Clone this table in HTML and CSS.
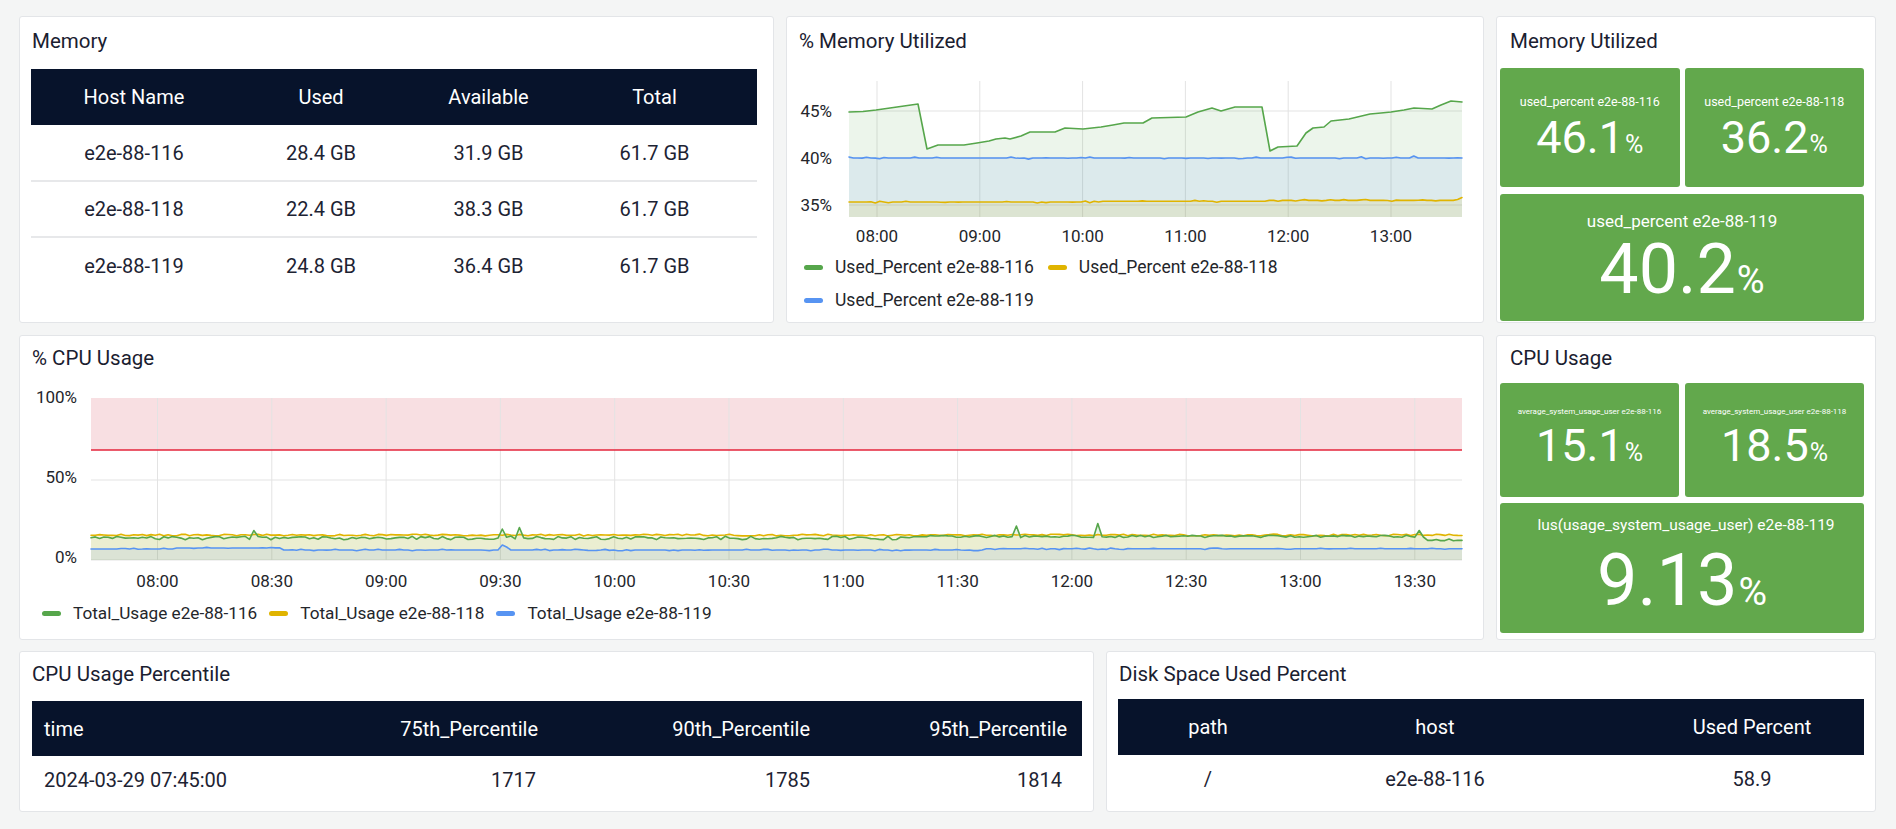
FILE: index.html
```html
<!DOCTYPE html>
<html lang="en">
<head>
<meta charset="utf-8">
<title>Host Metrics</title>
<link rel="stylesheet" href="styles.css">
</head>
<body>
<div class="dashboard">
  <div class="row row-1">
    <section class="panel">
      <h2 class="panel-title">Memory</h2>
      <table class="data-table table-memory">
        <colgroup><col class="mc1"><col class="mc2"><col class="mc3"><col class="mc4"></colgroup>
        <thead><tr><th>Host Name</th><th>Used</th><th>Available</th><th>Total</th></tr></thead>
        <tbody>
          <tr><td>e2e-88-116</td><td>28.4 GB</td><td>31.9 GB</td><td>61.7 GB</td></tr>
          <tr><td>e2e-88-118</td><td>22.4 GB</td><td>38.3 GB</td><td>61.7 GB</td></tr>
          <tr><td>e2e-88-119</td><td>24.8 GB</td><td>36.4 GB</td><td>61.7 GB</td></tr>
        </tbody>
      </table>
    </section>

    <section class="panel">
      <h2 class="panel-title">% Memory Utilized</h2>
      <div class="chart-wrap chart-mem">
        <svg class="chart" width="669" height="186" viewBox="0 0 669 186">
          <g class="grid">
            <line x1="50" y1="41" x2="663" y2="41"/>
            <line x1="50" y1="88" x2="663" y2="88"/>
            <line x1="50" y1="135" x2="663" y2="135"/>
            <line x1="78" y1="11" x2="78" y2="147"/>
            <line x1="180.8" y1="11" x2="180.8" y2="147"/>
            <line x1="283.6" y1="11" x2="283.6" y2="147"/>
            <line x1="386.4" y1="11" x2="386.4" y2="147"/>
            <line x1="489.2" y1="11" x2="489.2" y2="147"/>
            <line x1="592" y1="11" x2="592" y2="147"/>
          </g>
          <path id="m116-area" class="area area-green"/>
          <path id="m119-area" class="area area-blue"/>
          <path id="m118-area" class="area area-yellow"/>
          <path id="m119-line" class="line line-blue"/>
          <path id="m118-line" class="line line-yellow"/>
          <path id="m116-line" class="line line-green"/>
          <text class="axis-label" x="33" y="47" text-anchor="end">45%</text>
          <text class="axis-label" x="33" y="94" text-anchor="end">40%</text>
          <text class="axis-label" x="33" y="141" text-anchor="end">35%</text>
          <text class="axis-label" x="78" y="172" text-anchor="middle">08:00</text>
          <text class="axis-label" x="180.8" y="172" text-anchor="middle">09:00</text>
          <text class="axis-label" x="283.6" y="172" text-anchor="middle">10:00</text>
          <text class="axis-label" x="386.4" y="172" text-anchor="middle">11:00</text>
          <text class="axis-label" x="489.2" y="172" text-anchor="middle">12:00</text>
          <text class="axis-label" x="592" y="172" text-anchor="middle">13:00</text>
        </svg>
        <div class="legend legend-mem">
          <span class="legend-item"><i class="swatch sw-green"></i>Used_Percent e2e-88-116</span>
          <span class="legend-item"><i class="swatch sw-yellow"></i>Used_Percent e2e-88-118</span>
          <span class="legend-item"><i class="swatch sw-blue"></i>Used_Percent e2e-88-119</span>
        </div>
      </div>
    </section>

    <section class="panel">
      <h2 class="panel-title title-stat">Memory Utilized</h2>
      <div class="stat-grid stat-grid-mem">
        <div class="stat stat-mem-sm">
          <div class="stat-label label-md">used_percent e2e-88-116</div>
          <div class="stat-value value-md">46.1<span class="unit">%</span></div>
        </div>
        <div class="stat stat-mem-sm">
          <div class="stat-label label-md">used_percent e2e-88-118</div>
          <div class="stat-value value-md">36.2<span class="unit">%</span></div>
        </div>
        <div class="stat stat-wide stat-mem-lg">
          <div class="stat-label label-lg">used_percent e2e-88-119</div>
          <div class="stat-value value-lg">40.2<span class="unit">%</span></div>
        </div>
      </div>
    </section>
  </div>

  <div class="row row-2">
    <section class="panel">
      <h2 class="panel-title">% CPU Usage</h2>
      <div class="chart-wrap chart-cpu">
        <svg class="chart" width="1435" height="210" viewBox="0 0 1435 210">
          <rect class="threshold-area" x="58" y="13" width="1371" height="52"/>
          <g class="grid">
            <line x1="58" y1="95" x2="1429" y2="95"/>
            <line x1="58" y1="175" x2="1429" y2="175"/>
            <line x1="124.5" y1="13" x2="124.5" y2="175"/>
            <line x1="238.8" y1="13" x2="238.8" y2="175"/>
            <line x1="353.1" y1="13" x2="353.1" y2="175"/>
            <line x1="467.4" y1="13" x2="467.4" y2="175"/>
            <line x1="581.7" y1="13" x2="581.7" y2="175"/>
            <line x1="696" y1="13" x2="696" y2="175"/>
            <line x1="810.3" y1="13" x2="810.3" y2="175"/>
            <line x1="924.6" y1="13" x2="924.6" y2="175"/>
            <line x1="1038.9" y1="13" x2="1038.9" y2="175"/>
            <line x1="1153.2" y1="13" x2="1153.2" y2="175"/>
            <line x1="1267.5" y1="13" x2="1267.5" y2="175"/>
            <line x1="1381.8" y1="13" x2="1381.8" y2="175"/>
          </g>
          <line class="threshold-line" x1="58" y1="65" x2="1429" y2="65"/>
          <path id="c116-area" class="area area-green"/>
          <path id="c118-area" class="area area-yellow"/>
          <path id="c119-area" class="area area-blue"/>
          <path id="c119-line" class="line line-blue"/>
          <path id="c118-line" class="line line-yellow"/>
          <path id="c116-line" class="line line-green"/>
          <text class="axis-label" x="44" y="18" text-anchor="end">100%</text>
          <text class="axis-label" x="44" y="98" text-anchor="end">50%</text>
          <text class="axis-label" x="44" y="178" text-anchor="end">0%</text>
          <text class="axis-label" x="124.5" y="202" text-anchor="middle">08:00</text>
          <text class="axis-label" x="238.8" y="202" text-anchor="middle">08:30</text>
          <text class="axis-label" x="353.1" y="202" text-anchor="middle">09:00</text>
          <text class="axis-label" x="467.4" y="202" text-anchor="middle">09:30</text>
          <text class="axis-label" x="581.7" y="202" text-anchor="middle">10:00</text>
          <text class="axis-label" x="696" y="202" text-anchor="middle">10:30</text>
          <text class="axis-label" x="810.3" y="202" text-anchor="middle">11:00</text>
          <text class="axis-label" x="924.6" y="202" text-anchor="middle">11:30</text>
          <text class="axis-label" x="1038.9" y="202" text-anchor="middle">12:00</text>
          <text class="axis-label" x="1153.2" y="202" text-anchor="middle">12:30</text>
          <text class="axis-label" x="1267.5" y="202" text-anchor="middle">13:00</text>
          <text class="axis-label" x="1381.8" y="202" text-anchor="middle">13:30</text>
        </svg>
        <div class="legend legend-cpu">
          <span class="legend-item"><i class="swatch sw-green"></i>Total_Usage e2e-88-116</span>
          <span class="legend-item"><i class="swatch sw-yellow"></i>Total_Usage e2e-88-118</span>
          <span class="legend-item"><i class="swatch sw-blue"></i>Total_Usage e2e-88-119</span>
        </div>
      </div>
    </section>

    <section class="panel">
      <h2 class="panel-title title-stat">CPU Usage</h2>
      <div class="stat-grid stat-grid-cpu">
        <div class="stat stat-cpu-sm">
          <div class="stat-label label-xs">average_system_usage_user e2e-88-116</div>
          <div class="stat-value value-md">15.1<span class="unit">%</span></div>
        </div>
        <div class="stat stat-cpu-sm">
          <div class="stat-label label-xs">average_system_usage_user e2e-88-118</div>
          <div class="stat-value value-md">18.5<span class="unit">%</span></div>
        </div>
        <div class="stat stat-wide stat-cpu-lg">
          <div class="stat-label label-clip">lus(usage_system_usage_user) e2e-88-119</div>
          <div class="stat-value value-xl">9.13<span class="unit">%</span></div>
        </div>
      </div>
    </section>
  </div>

  <div class="row row-3">
    <section class="panel">
      <h2 class="panel-title">CPU Usage Percentile</h2>
      <table class="data-table table-pct">
        <colgroup><col class="pc1"><col class="pc2"><col class="pc3"><col class="pc4"></colgroup>
        <thead><tr><th>time</th><th>75th_Percentile</th><th>90th_Percentile</th><th>95th_Percentile</th></tr></thead>
        <tbody>
          <tr><td>2024-03-29 07:45:00</td><td>1717</td><td>1785</td><td>1814</td></tr>
        </tbody>
      </table>
    </section>

    <section class="panel">
      <h2 class="panel-title">Disk Space Used Percent</h2>
      <table class="data-table table-disk">
        <colgroup><col class="dc1"><col class="dc2"><col class="dc3"></colgroup>
        <thead><tr><th>path</th><th>host</th><th>Used Percent</th></tr></thead>
        <tbody>
          <tr><td>/</td><td>e2e-88-116</td><td>58.9</td></tr>
        </tbody>
      </table>
    </section>
  </div>
</div>
<script src="script.js"></script>
</body>
</html>
```

FILE: styles.css
```css
* { box-sizing: border-box; }
html, body { margin: 0; padding: 0; }
body {
  background: #f4f5f5;
  font-family: Roboto, "Liberation Sans", Arial, sans-serif;
  color: #1d2333;
  width: 1896px;
  height: 829px;
  overflow: hidden;
}
.dashboard { padding: 16px 20px 0 19px; }
.row { display: grid; column-gap: 12px; }
.row-1 { grid-template-columns: 755px 698px 1fr; height: 307px; }
.row-2 { grid-template-columns: 1465px 1fr; height: 305px; margin-top: 12px; }
.row-3 { grid-template-columns: 1075px 1fr; height: 161px; margin-top: 11px; }

.panel {
  background: #fff;
  border: 1px solid #e3e5e8;
  border-radius: 3px;
  display: flex;
  flex-direction: column;
  min-width: 0;
  overflow: hidden;
}
.panel-title {
  margin: 0;
  padding: 12px 12px 0;
  font-size: 20.5px;
  line-height: 24px;
  font-weight: 400;
  color: #1a2030;
  white-space: nowrap;
}
.row-2 .panel-title, .row-3 .panel-title { padding-top: 10px; padding-bottom: 2px; }
.title-stat { padding-left: 13px; }

/* tables */
.data-table {
  border-collapse: collapse;
  table-layout: fixed;
  font-size: 20px;
  color: #1d2333;
  margin-left: 11px;
}
.data-table th {
  background: #07132b;
  color: #fff;
  font-weight: 400;
  padding: 0;
}
.data-table td { padding: 0; }

.table-memory { width: 726px; margin-top: 16px; }
.table-memory th, .table-memory td { text-align: center; }
.table-memory th { height: 56px; }
.table-memory td { height: 56px; border-bottom: 2px solid #e7e8ea; }
.table-memory tr:last-child td { border-bottom: none; }
.table-memory th:last-child, .table-memory td:last-child { padding-right: 20px; }
.mc1 { width: 206px; }
.mc2 { width: 168px; }
.mc3 { width: 167px; }
.mc4 { width: 185px; }

.table-pct { width: 1050px; margin-top: 13px; margin-left: 12px; }
.table-pct th { height: 55px; }
.table-pct td { height: 48px; }
.table-pct th, .table-pct td { text-align: right; padding-right: 15px; }
.table-pct th:first-child, .table-pct td:first-child { text-align: left; padding: 0 0 0 12px; }
.table-pct td:nth-child(2) { padding-right: 17px; }
.table-pct td:last-child { padding-right: 20px; }
.pc1 { width: 262px; }
.pc2 { width: 259px; }
.pc3 { width: 272px; }
.pc4 { width: 257px; }

.table-disk { width: 746px; margin-top: 11px; }
.table-disk th { height: 56px; }
.table-disk td { height: 48px; }
.table-disk th, .table-disk td { text-align: center; }
.table-disk th:last-child, .table-disk td:last-child { padding-left: 68px; }
.dc1 { width: 180px; }
.dc2 { width: 274px; }
.dc3 { width: 292px; }

/* charts */
.chart-wrap { padding: 0 12px; }
.chart-mem { margin-top: 17px; }
.chart-cpu { margin-top: 13px; padding-left: 13px; }
.chart { display: block; overflow: visible; }
.grid line { stroke: #e3e3e3; stroke-width: 1; }
.threshold-area { fill: #f8dfe2; }
.threshold-line { stroke: #e5243b; stroke-width: 1.6; }
.area { stroke: none; }
.area-green { fill: rgba(86, 166, 75, 0.11); }
.area-yellow { fill: rgba(224, 180, 0, 0.11); }
.area-blue { fill: rgba(87, 148, 242, 0.11); }
.line { fill: none; stroke-width: 1.6; stroke-linejoin: round; stroke-linecap: round; }
.line-green { stroke: #56a64b; }
.line-yellow { stroke: #e0b400; }
.line-blue { stroke: #5794f2; }
.axis-label {
  font-family: Roboto, "Liberation Sans", Arial, sans-serif;
  font-size: 17px;
  fill: #24262b;
}

.legend {
  display: flex;
  flex-wrap: wrap;
  font-size: 17.5px;
  line-height: 22px;
  color: #24262b;
  white-space: nowrap;
}
.legend-mem { padding-left: 5px; column-gap: 14px; row-gap: 11px; }
.legend-cpu { padding-left: 9px; column-gap: 12px; margin-top: 7px; font-size: 17.2px; }
.legend-item { display: inline-flex; align-items: center; }
.swatch {
  display: inline-block;
  width: 19px;
  height: 5px;
  border-radius: 3px;
  margin-right: 12px;
}
.sw-green { background: #56a64b; }
.sw-yellow { background: #e0b400; }
.sw-blue { background: #5794f2; }

/* stats */
.stat-grid {
  flex: 1;
  display: grid;
  grid-template-columns: 1fr 1fr;
  padding: 0 11px 1px 3px;
}
.stat-grid-mem { margin-top: 15px; grid-template-rows: 119fr 127fr; gap: 7px 5px; }
.stat-grid-cpu { margin-top: 11px; grid-template-rows: 114fr 130fr; gap: 6px 6px; padding-bottom: 6px; }
.stat {
  background: #62a84c;
  border-radius: 3px;
  color: #fff;
  display: flex;
  flex-direction: column;
  align-items: center;
  justify-content: center;
  overflow: hidden;
  min-height: 0;
}
.stat-wide { grid-column: 1 / span 2; }
.stat-mem-sm { padding-top: 8px; }
.stat-mem-sm .stat-label { margin-bottom: 3px; }
.stat-mem-lg { padding-top: 14px; }
.stat-cpu-sm { padding-top: 4px; }
.stat-cpu-sm .stat-label { margin-bottom: 3px; }
.stat-cpu-lg { padding-top: 10px; }
.stat-cpu-lg .stat-label { margin-bottom: 5px; }
.stat-label { white-space: nowrap; text-align: center; }
.label-xs { font-size: 8px; line-height: 12px; }
.label-md { font-size: 12.5px; line-height: 16px; }
.label-lg { font-size: 17px; line-height: 20px; }
.label-clip { font-size: 15.5px; line-height: 22px; padding-left: 8px; }
.stat-value { white-space: nowrap; font-weight: 400; }
.value-md { font-size: 45px; line-height: 50px; }
.value-md .unit { font-size: 25px; }
.value-lg { font-size: 70px; line-height: 76px; }
.value-lg .unit { font-size: 38px; }
.value-xl { font-size: 72px; line-height: 80px; }
.value-xl .unit { font-size: 39px; }
.unit { margin-left: 1px; }
```

FILE: script.js
```js
(function () {
  function rng(seed) {
    return function () {
      seed = (seed + 0x6D2B79F5) | 0;
      var t = Math.imul(seed ^ (seed >>> 15), 1 | seed);
      t = (t + Math.imul(t ^ (t >>> 7), 61 | t)) ^ t;
      return ((t ^ (t >>> 14)) >>> 0) / 4294967296;
    };
  }
  function toPath(pts) {
    return pts.map(function (p, i) {
      return (i ? 'L' : 'M') + p[0].toFixed(1) + ' ' + p[1].toFixed(1);
    }).join('');
  }
  function draw(id, pts, bottom) {
    var d = toPath(pts);
    document.getElementById(id + '-line').setAttribute('d', d);
    var a = d + 'L' + pts[pts.length - 1][0].toFixed(1) + ' ' + bottom +
      'L' + pts[0][0].toFixed(1) + ' ' + bottom + 'Z';
    document.getElementById(id + '-area').setAttribute('d', a);
  }
  function spike(arr, x, y) {
    var best = 0, bd = 1e9;
    for (var i = 0; i < arr.length; i++) {
      var dd = Math.abs(arr[i][0] - x);
      if (dd < bd) { bd = dd; best = i; }
    }
    arr[best][1] = y;
  }

  /* memory chart */
  var g116 = [[50,42],[64,41.5],[77,40],[91,38],[105,36],[119,34],[128,79],[139,75],[165,75],[178,73],[190,71],[197,69],[206,68],[211,69],[222,66],[231,62],[256,62],[266,58],[284,59],[302,57],[314,55],[325,53],[344,53],[353,48],[387,47],[399,42],[413,38],[422,41],[436,37],[463,37],[471,81],[479,77],[498,76],[507,63],[514,58],[525,57],[532,51],[550,49],[571,44],[582,43],[592,42],[605,40],[615,38],[633,39],[642,35],[652,31],[663,32]];
  var r = rng(7);
  var blue = [], yel = [], i, x;
  for (i = 0; i <= 140; i++) {
    x = 50 + i * (613 / 140);
    blue.push([x, 88 + (r() < 0.3 ? (r() - 0.5) * 2.2 : 0)]);
    var yb = x < 300 ? 132 : (x < 470 ? 131.2 : 130.4);
    yel.push([x, yb + (r() < 0.35 ? (r() - 0.5) * 2 : 0)]);
  }
  spike(blue, 617, 86);
  spike(blue, 563, 86.8);
  yel[yel.length - 2][1] = 129.5;
  yel[yel.length - 1][1] = 127.5;
  draw('m116', g116, 147);
  draw('m119', blue, 147);
  draw('m118', yel, 147);

  /* cpu chart */
  var r2 = rng(42);
  var N = 320, x0 = 58, x1 = 1429;
  var y2 = [], g2 = [], b2 = [];
  for (i = 0; i <= N; i++) {
    x = x0 + i * (x1 - x0) / N;
    y2.push([x, 150 + (r2() - 0.5) * 1.8]);
    var gb = x < 880 ? 153 : (x < 1392 ? 151.4 : 154.5);
    g2.push([x, gb + (r2() - 0.5) * (x < 880 ? 3.4 : 2.4)]);
    var bb = x < 140 ? 164 : (x < 250 ? 163 : (x < 950 ? 165 : 163.8));
    b2.push([x, bb + (r2() < 0.4 ? (r2() - 0.5) * 1.6 : 0)]);
  }
  spike(g2, 222, 145.5);
  spike(g2, 469, 144);
  spike(g2, 477, 151);
  spike(g2, 485, 142.5);
  spike(g2, 982, 141);
  spike(g2, 1066, 138.5);
  spike(g2, 1387, 145.5);
  spike(b2, 469, 160);
  spike(b2, 473, 162);
  draw('c116', g2, 175);
  draw('c118', y2, 175);
  draw('c119', b2, 175);
})();
```
